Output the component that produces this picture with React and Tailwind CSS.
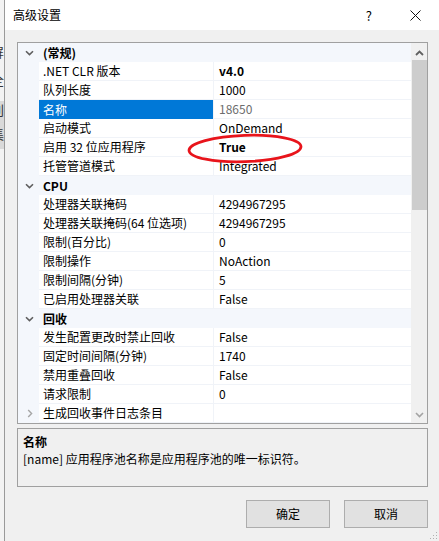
import React from "react";

const rows = [
  { cat: "(常规)" },
  { name: ".NET CLR 版本", value: "v4.0", bold: true },
  { name: "队列长度", value: "1000" },
  { name: "名称", value: "18650", selected: true, muted: true },
  { name: "启动模式", value: "OnDemand" },
  { name: "启用 32 位应用程序", value: "True", bold: true },
  { name: "托管管道模式", value: "Integrated" },
  { cat: "CPU" },
  { name: "处理器关联掩码", value: "4294967295" },
  { name: "处理器关联掩码(64 位选项)", value: "4294967295" },
  { name: "限制(百分比)", value: "0" },
  { name: "限制操作", value: "NoAction" },
  { name: "限制间隔(分钟)", value: "5" },
  { name: "已启用处理器关联", value: "False" },
  { cat: "回收" },
  { name: "发生配置更改时禁止回收", value: "False" },
  { name: "固定时间间隔(分钟)", value: "1740" },
  { name: "禁用重叠回收", value: "False" },
  { name: "请求限制", value: "0" },
  { name: "生成回收事件日志条目", value: "", collapsed: true },
];

const ChevronDown = () => (
  <svg width="9" height="6" viewBox="0 0 9 6">
    <path d="M1 1.2 L4.5 4.6 L8 1.2" fill="none" stroke="#5f5f5f" strokeWidth="1.6" />
  </svg>
);

const ChevronRight = () => (
  <svg width="6" height="9" viewBox="0 0 6 9">
    <path d="M1.2 1 L4.6 4.5 L1.2 8" fill="none" stroke="#a6a6a6" strokeWidth="1.4" />
  </svg>
);

const GridRow = ({ row }) => {
  if (row.cat) {
    return (
      <div className="flex h-[19px] items-center bg-[#f4f7fc]">
        <div className="flex w-[21px] justify-center pl-[2px]">
          <ChevronDown />
        </div>
        <span className="pl-[4px] font-bold text-black">{row.cat}</span>
      </div>
    );
  }
  return (
    <div className="flex h-[19px]">
      <div className="flex w-[21px] items-center justify-center bg-[#f4f7fc] pl-[2px]">
        {row.collapsed && <ChevronRight />}
      </div>
      <div
        className={
          row.selected
            ? "flex w-[174px] items-center bg-[#0078d7] pl-[4px] text-white"
            : "flex w-[174px] items-center border-b border-[#f0f3f8] pl-[4px] text-black"
        }
      >
        {row.name}
      </div>
      <div className="w-px bg-[#f0f3f8]" />
      <div
        className={
          "flex flex-1 items-center border-b border-[#f0f3f8] pl-[5px] " +
          (row.bold ? "font-bold text-black " : "") +
          (row.muted ? "text-[#6d6d6d]" : "text-black")
        }
      >
        {row.value}
      </div>
    </div>
  );
};

const App = () => {
  return (
    <div className="relative flex h-[541px] w-[439px] overflow-hidden bg-[#f0f0f0] text-[12px] leading-none font-['Noto_Sans_CJK_SC',sans-serif]">
      {/* window behind the dialog, only a sliver shows */}
      <div className="w-[4px] overflow-hidden bg-[#f3f3f3] text-[13px] text-[#333]">
        <div className="-ml-[9px] flex flex-col">
          <span className="mt-[45px] h-[28px]">屏</span>
          <span className="h-[28px]">全</span>
          <span className="h-[24px] bg-[#d9d9d9] pt-[2px]">刊</span>
          <span className="h-[24px] bg-[#d9d9d9] pt-[2px]">集</span>
        </div>
      </div>
      <div className="w-px bg-[#9a9a9a]" />

      <div className="flex flex-1 flex-col">
        {/* title bar */}
        <div className="flex h-[30px] items-center bg-white">
          <span className="pl-[8px] text-[12px] text-black">高级设置</span>
          <span className="ml-auto mr-[38px] text-[13px] text-black">?</span>
          <svg className="mr-[18px]" width="11" height="11" viewBox="0 0 11 11">
            <path d="M0.5 0.5 L10.5 10.5 M10.5 0.5 L0.5 10.5" stroke="#111" strokeWidth="1" />
          </svg>
        </div>

        <div className="flex flex-col pl-[12px] pr-[11px]">
          {/* property grid */}
          <div className="mt-[12px] flex h-[382px] border border-[#a0a0a0] bg-white">
            <div className="flex flex-1 flex-col">
              {rows.map((row, i) => (
                <GridRow key={i} row={row} />
              ))}
            </div>
            <div className="flex w-[16px] flex-col items-center bg-[#f0f0f0]">
              <svg className="mt-[7px]" width="9" height="6" viewBox="0 0 9 6">
                <path d="M1 5 L4.5 1.5 L8 5" fill="none" stroke="#606060" strokeWidth="1.8" />
              </svg>
              <div className="mt-[4px] h-[150px] w-[15px] bg-[#cdcdcd]" />
              <svg className="mb-[5px] mt-auto" width="9" height="6" viewBox="0 0 9 6">
                <path d="M1 1 L4.5 4.5 L8 1" fill="none" stroke="#a3a3a3" strokeWidth="1.6" />
              </svg>
            </div>
          </div>

          {/* description */}
          <div className="mt-[4px] flex h-[59px] flex-col border border-[#a0a0a0] px-[5px] pt-[7px]">
            <span className="font-bold text-black">名称</span>
            <span className="mt-[5px] text-black">[name] 应用程序池名称是应用程序池的唯一标识符。</span>
          </div>

          {/* buttons */}
          <div className="mt-[13px] flex justify-end gap-[14px]">
            <button className="h-[28px] w-[84px] border border-[#adadad] bg-[#e1e1e1] text-[12px] text-black">
              确定
            </button>
            <button className="h-[28px] w-[84px] border border-[#adadad] bg-[#e1e1e1] text-[12px] text-black">
              取消
            </button>
          </div>
        </div>
      </div>

      {/* resize grip */}
      <svg className="absolute bottom-[1px] right-[1px]" width="8" height="8" viewBox="0 0 8 8">
        <rect x="6" y="0" width="1" height="1" fill="#b0b0b0" />
        <rect x="3" y="3" width="1" height="1" fill="#b0b0b0" />
        <rect x="6" y="3" width="1" height="1" fill="#b0b0b0" />
        <rect x="0" y="6" width="1" height="1" fill="#b0b0b0" />
        <rect x="3" y="6" width="1" height="1" fill="#b0b0b0" />
        <rect x="6" y="6" width="1" height="1" fill="#b0b0b0" />
      </svg>

      {/* red annotation ellipse */}
      <svg className="pointer-events-none absolute left-[186px] top-[132px]" width="120" height="34" viewBox="0 0 120 34">
        <ellipse cx="59" cy="16.5" rx="56" ry="13.2" fill="none" stroke="#e8141b" strokeWidth="2.8" transform="rotate(-2 59 16.5)" />
      </svg>
    </div>
  );
};

export default App;
